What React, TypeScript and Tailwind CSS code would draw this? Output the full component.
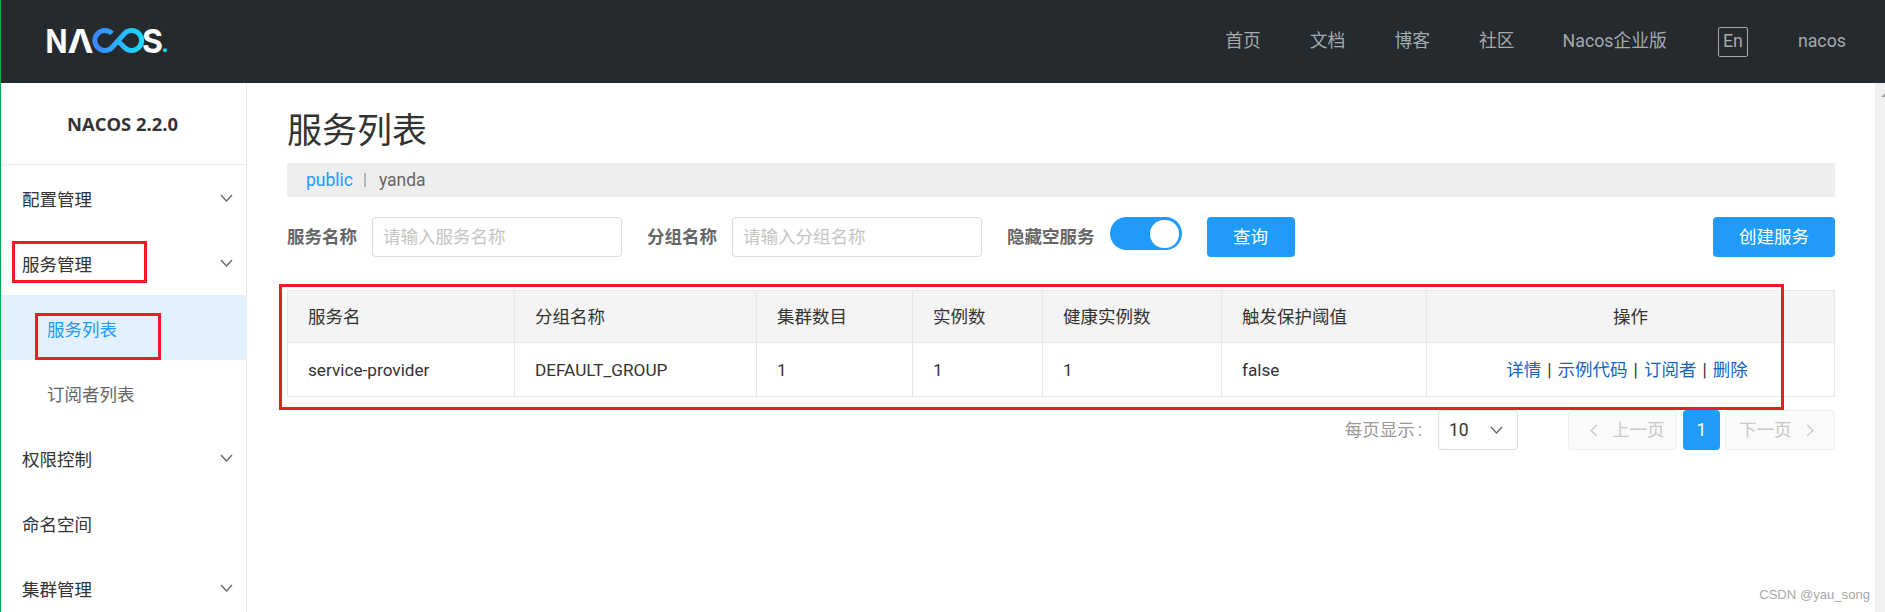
import React from "react";

const FONT = "font-['Roboto','Noto_Sans_CJK_SC',sans-serif]";

function Chevron({ dir = "down", color = "#666", size = 13 }: { dir?: "down" | "left" | "right"; color?: string; size?: number }) {
  const pts = dir === "down" ? "1,1 6.5,7 12,1" : dir === "left" ? "7,1 1,6.5 7,12" : "1,1 7,6.5 1,12";
  const w = dir === "down" ? size : 8;
  const h = dir === "down" ? 8 : 13;
  return (
    <svg width={w} height={h} viewBox={`0 0 ${w} ${h}`} fill="none" className="shrink-0">
      <polyline points={pts} stroke={color} strokeWidth="1.3" />
    </svg>
  );
}

function Logo() {
  const font = "Inter, sans-serif";
  return (
    <svg width="126" height="46" viewBox="43 18.5 126 46" className="shrink-0">
      <defs>
        <linearGradient id="inf" x1="94" x2="143" y1="0" y2="0" gradientUnits="userSpaceOnUse">
          <stop offset="0" stopColor="#3a86ff" />
          <stop offset="1" stopColor="#1cdcf7" />
        </linearGradient>
      </defs>
      <text x="45.5" y="52" fontFamily={font} fontWeight="700" fontSize="33" fill="#fff" textLength="22" lengthAdjust="spacingAndGlyphs">N</text>
      <text x="67.5" y="52" fontFamily={font} fontWeight="700" fontSize="33" fill="#fff" textLength="26" lengthAdjust="spacingAndGlyphs">Λ</text>
      <path
        d="M112 33 A10 10 0 1 0 112 47 L124.5 33 A10 10 0 1 1 124.5 47 L119 41.5"
        fill="none"
        stroke="url(#inf)"
        strokeWidth="5"
      />
      <text x="142" y="52" fontFamily={font} fontWeight="700" fontSize="33" fill="#fff" textLength="21" lengthAdjust="spacingAndGlyphs">S</text>
      <circle cx="165" cy="49.7" r="2" fill="#1cdcf7" />
    </svg>
  );
}

function MenuItem({ label, arrow }: { label: string; arrow?: boolean }) {
  return (
    <div className="flex h-[65px] items-center justify-between pl-[21px] pr-[13px] text-[17.5px] text-[#333]">
      <span className="pt-[5px]">{label}</span>
      {arrow && (
        <span className="pt-[1px]">
          <Chevron />
        </span>
      )}
    </div>
  );
}

const cols = [227, 242, 156, 130, 179, 205, 408];
const heads = ["服务名", "分组名称", "集群数目", "实例数", "健康实例数", "触发保护阈值"];
const vals = ["service-provider", "DEFAULT_GROUP", "1", "1", "1", "false"];

function RedBox({ className }: { className: string }) {
  return <div className={`pointer-events-none absolute border-[3px] border-[#ed1c24] ${className}`} />;
}

export default function App() {
  return (
    <div className={`relative flex h-[612px] w-[1885px] flex-col overflow-hidden border-l border-[#00b050] bg-white ${FONT}`}>
      <header className="flex h-[83px] shrink-0 items-center bg-[#252a2f] pl-[42px] pr-[39px] text-[17.8px] text-[#a4a9ad]">
        <Logo />
        <nav className="ml-auto flex items-center gap-[49px]">
          <span>首页</span>
          <span>文档</span>
          <span>博客</span>
          <span>社区</span>
          <span className="ml-[-1px] mr-[2px]">Nacos企业版</span>
          <span className="flex h-[30px] w-[30px] items-center justify-center rounded-[2px] border border-[#a4a9ad]">En</span>
          <span className="ml-px">nacos</span>
        </nav>
      </header>

      <div className="flex min-h-0 flex-1">
        <aside className="w-[246px] shrink-0 border-r border-[#eaeaea]">
          <div className="flex h-[82px] items-center justify-center border-b border-[#eeeeee] pr-[2px] font-['Open_Sans',sans-serif] text-[18.4px] font-bold text-[#333]">
            NACOS 2.2.0
          </div>
          <MenuItem label="配置管理" arrow />
          <MenuItem label="服务管理" arrow />
          <div className="flex h-[65px] items-center bg-[#e3f1fd] pl-[46px] pt-[5px] text-[17.5px] text-[#209bfa]">服务列表</div>
          <div className="flex h-[65px] items-center pl-[46px] pt-[5px] text-[17.5px] text-[#666]">订阅者列表</div>
          <MenuItem label="权限控制" arrow />
          <MenuItem label="命名空间" />
          <MenuItem label="集群管理" arrow />
        </aside>

        <main className="min-w-0 flex-1 px-[40px] pt-[29px]">
          <h1 className="text-[35px] font-normal leading-[40px] text-[#333]">服务列表</h1>
          <div className="mt-[11px] flex h-[34px] items-center bg-[#eeeeee] pl-[19px] text-[17.5px] text-[#666]">
            <span className="text-[#209bfa]">public</span>
            <span className="ml-[10px] mr-[12px] text-[16px] text-[#999]">|</span>
            <span>yanda</span>
          </div>

          <div className="mt-[20px] flex h-[40px] items-center text-[17.5px]">
            <label className="mr-[15px] font-bold text-[#666]">服务名称</label>
            <input
              placeholder="请输入服务名称"
              className="h-[40px] w-[250px] rounded-[4px] border border-[#dcdcdc] px-[10px] text-[17.5px] outline-none placeholder:text-[#c4c4c4]"
            />
            <label className="ml-[25px] mr-[15px] font-bold text-[#666]">分组名称</label>
            <input
              placeholder="请输入分组名称"
              className="h-[40px] w-[250px] rounded-[4px] border border-[#dcdcdc] px-[10px] text-[17.5px] outline-none placeholder:text-[#c4c4c4]"
            />
            <label className="ml-[25px] mr-[15px] font-bold text-[#666]">隐藏空服务</label>
            <div className="mb-[7px] flex h-[33px] w-[72px] items-center justify-end rounded-full bg-[#209bfa] pr-[3px]">
              <div className="h-[28px] w-[29px] rounded-full bg-white" />
            </div>
            <button className="ml-[25px] h-[40px] w-[88px] rounded-[4px] bg-[#209bfa] text-white">查询</button>
            <button className="ml-auto h-[40px] w-[122px] rounded-[4px] bg-[#209bfa] text-white">创建服务</button>
          </div>

          <table className="mt-[33px] w-[1547px] table-fixed border-collapse text-[17.5px] text-[#333]">
            <colgroup>
              {cols.map((w, i) => (
                <col key={i} style={{ width: w }} />
              ))}
            </colgroup>
            <thead>
              <tr className="h-[52px] bg-[#f4f4f4]">
                {heads.map((h) => (
                  <th key={h} className="border border-[#e6e6e6] pl-[20px] pt-[2px] text-left font-normal">
                    {h}
                  </th>
                ))}
                <th className="border border-[#e6e6e6] pt-[2px] text-center font-normal">操作</th>
              </tr>
            </thead>
            <tbody>
              <tr className="h-[54px]">
                {vals.map((v, i) => (
                  <td key={i} className="border border-[#e6e6e6] pl-[20px] pt-[2px] text-[17.2px]">
                    {v}
                  </td>
                ))}
                <td className="border border-[#e6e6e6] pr-[7px] pt-[2px] text-center">
                  <span className="text-[#1565c0]">详情</span>
                  <span className="mx-[6px]">|</span>
                  <span className="text-[#1565c0]">示例代码</span>
                  <span className="mx-[6px]">|</span>
                  <span className="text-[#1565c0]">订阅者</span>
                  <span className="mx-[6px]">|</span>
                  <span className="text-[#1565c0]">删除</span>
                </td>
              </tr>
            </tbody>
          </table>

          <div className="mt-[13px] flex h-[40px] items-center justify-end text-[17.5px]">
            <span className="mr-[16px] text-[#999]">
              每页显示<span className="ml-[3px]">:</span>
            </span>
            <div className="flex h-[40px] w-[80px] items-center justify-between rounded-[4px] border border-[#dcdcdc] pl-[10px] pr-[14px] text-[#333]">
              <span>10</span>
              <Chevron />
            </div>
            <div className="ml-[50px] flex h-[40px] w-[109px] items-center gap-[14px] rounded-[4px] border border-[#eeeeee] bg-[#fafafa] pl-[21px] text-[#c8c8c8]">
              <Chevron dir="left" color="#c8c8c8" />
              <span>上一页</span>
            </div>
            <div className="ml-[6px] flex h-[40px] w-[37px] items-center justify-center rounded-[4px] bg-[#209bfa] text-white">1</div>
            <div className="ml-[5px] flex h-[40px] w-[110px] items-center gap-[14px] rounded-[4px] border border-[#eeeeee] bg-[#fafafa] pl-[13px] text-[#c8c8c8]">
              <span>下一页</span>
              <Chevron dir="right" color="#c8c8c8" />
            </div>
          </div>
        </main>

        <div className="w-[10px] shrink-0 bg-[#f1f1f1] pt-[10px]">
          <svg width="4" height="4" viewBox="0 0 4 4" className="ml-auto">
            <polygon points="4,0 4,4 0,4" fill="#a3a3a3" />
          </svg>
        </div>
      </div>

      <RedBox className="left-[11px] top-[241px] h-[42px] w-[135px]" />
      <RedBox className="left-[34px] top-[313px] h-[47px] w-[126px]" />
      <RedBox className="left-[278px] top-[284px] h-[126px] w-[1505px]" />

      <div className="absolute right-[15px] top-[587px] font-['Liberation_Sans',sans-serif] text-[13.1px] leading-[16px] text-[#a8a8a8]">
        CSDN @yau_song
      </div>
    </div>
  );
}
